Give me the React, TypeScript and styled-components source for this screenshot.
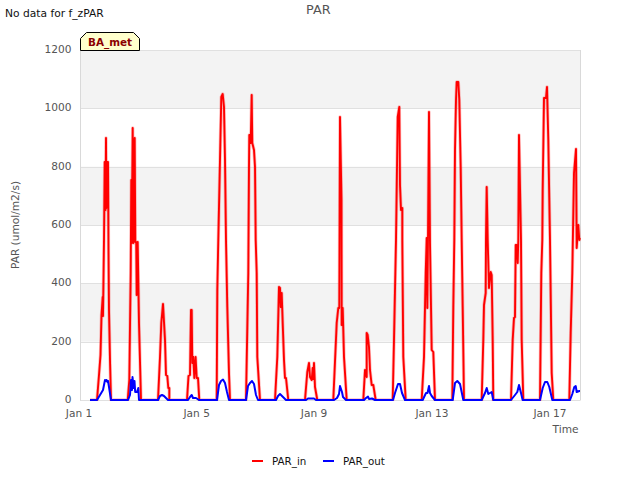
import React from "react";
import styled, { createGlobalStyle } from "styled-components";

const Global = createGlobalStyle`
  html, body { margin: 0; padding: 0; background: #fff; }
  * { box-sizing: border-box; }
`;

const Figure = styled.div`
  width: 640px;
  height: 480px;
  display: flex;
  flex-direction: column;
  font-family: "DejaVu Sans", sans-serif;
  overflow: hidden;
`;

const Header = styled.header`
  height: 30px;
  flex: none;
  display: flex;
  align-items: flex-start;
  padding-left: 5px;
`;

const Note = styled.span`
  font-size: 10.7px;
  line-height: 12px;
  margin-top: 8px;
  color: #111;
  width: 301px;
`;

const Title = styled.h1`
  margin: 3px 0 0;
  font-size: 12.8px;
  line-height: 14px;
  font-weight: 400;
  color: #555;
`;

const ChartArea = styled.div`
  position: relative;
  flex: none;
  height: 420px;
`;

const Plot = styled.svg`
  display: block;
  width: 640px;
  height: 420px;
`;

const AxisText = styled.text`
  font-family: "DejaVu Sans", sans-serif;
  font-size: 10.6px;
  fill: #555;
`;

const Badge = styled.div`
  position: absolute;
  left: 80px;
  top: 2px;
  width: 60px;
  height: 19px;
  display: flex;
  align-items: center;
  justify-content: center;
`;

const BadgeShape = styled.svg`
  position: absolute;
  inset: 0;
`;

const BadgeLabel = styled.span`
  position: relative;
  font-size: 10.4px;
  font-weight: 700;
  color: #8b0000;
`;

const Legend = styled.footer`
  height: 30px;
  flex: none;
  display: flex;
  align-items: flex-start;
  padding: 5px 0 0 252px;
`;

const LegendItem = styled.div<{ $w: number }>`
  width: ${(p) => p.$w}px;
  display: flex;
  align-items: center;
  font-size: 10.3px;
  line-height: 12px;
  color: #111;
`;

const Swatch = styled.i<{ $c: string }>`
  display: block;
  width: 11px;
  height: 2px;
  margin-right: 9px;
  background: ${(p) => p.$c};
`;

type P = [number, number];

const redDays: P[][] = [
  [[97,400],[99,375],[100.5,355],[101.5,315],[102.7,297],[103,316],[104,240],[104.7,162],[105.3,162],[105.5,210],[106,138],[106.4,208],[107,162],[108,162],[108.5,250],[109,310],[110,360],[111,400]],
  [[127.7,400],[129.3,380],[130.7,273],[131.3,180],[131.7,243],[132.7,128],[133.4,243],[134.7,138],[135.3,242],[136.2,242],[136.7,295],[137.7,242],[139,323],[141,400]],
  [[158,400],[160,357],[161.3,323],[163,304],[165,340],[166,375],[167.3,376],[168.3,388],[169.3,388],[169.3,400]],
  [[187,400],[188.5,376],[190,375],[191,310],[191.7,310],[192.3,363],[193.3,357],[194.3,378],[195.6,357],[196.7,378],[198,378],[199.3,400]],
  [[216.7,400],[217.3,290],[218.3,240],[220,160],[221.3,97],[222.7,94],[224,107],[225,160],[226,240],[227.3,307],[229,373],[230,400]],
  [[246,400],[248.3,273],[248.5,240],[249,167],[249.3,135],[250.7,135],[250.7,143],[251.7,95],[252.3,143],[254,150],[255,167],[255.7,240],[256.7,273],[257.3,357],[260,400]],
  [[275,400],[277.3,357],[279,287],[280,288],[280.7,307],[281.7,293],[282.7,323],[284,360],[285,378],[286,378],[288.3,400]],
  [[305,400],[307.3,372],[309,363],[310,377],[311.7,380],[312.7,368],[313.3,379],[314,363],[315,387],[317.3,400]],
  [[333.3,400],[336.7,323],[338.3,308],[339.3,308],[340,117],[341.5,200],[341.7,325],[342.7,308],[344,357],[346.7,400]],
  [[363.3,400],[365,370],[366.7,377],[366.7,333],[367.7,335],[369,347],[370,370],[371.7,385],[373.3,385],[375.7,400]],
  [[392.7,400],[394,340],[396,240],[397.7,117],[399.3,107],[400,185],[401,210],[402.3,208],[402.3,240],[403.3,357],[405.7,400]],
  [[421.7,400],[424,357],[425.7,273],[426.7,238],[427.3,308],[428,238],[429,112],[430,243],[431.7,350],[433.3,352],[435,400]],
  [[452.3,400],[453.3,307],[454.3,240],[455,150],[456,100],[456.7,82],[458.3,82],[459.3,100],[460.7,167],[461.7,240],[462.7,307],[464,400]],
  [[481.7,400],[483.3,340],[484,305],[485.7,293],[486,238],[486.7,187],[487.7,240],[489,288],[490.7,272],[491.7,275],[492.7,340],[493.3,400]],
  [[511,400],[512.7,340],[514,318],[515,317],[515.7,245],[516.7,245],[517.7,263],[518.3,240],[519,135],[520,187],[521,240],[521.7,340],[523.3,400]],
  [[540,400],[541.3,273],[542.3,240],[542.7,190],[544,98],[546,98],[547,87],[548.3,140],[550,240],[551.7,373],[553.3,400]],
  [[569.3,400],[570.7,333],[572.3,273],[574,173],[576,149],[576.7,248],[578.3,225],[579.3,240],[580,238]],
];

const blueDays: P[][] = [
  [[97,400],[100,395],[103,390],[105,380],[106,381],[106.5,380],[107.5,382],[108,381],[109,387],[111,400]],
  [[128,400],[130,395],[131,380],[132,390],[132.5,377],[133.7,388],[134.5,381],[135.2,392],[137,392],[138.3,388],[139,400]],
  [[158,400],[160,396],[162,395],[164,396],[166,398],[168,400]],
  [[188,400],[190,397],[191.7,395],[193,398],[196,398],[199,400]],
  [[217,400],[219,385],[221,381],[223,379.5],[225,383],[227,392],[229,400]],
  [[246,400],[248,386],[250,383],[252,381],[254,384],[256,395],[258,400]],
  [[276,400],[278,396],[280,394],[283,397],[286,400]],
  [[306,400],[308,398.5],[314,398.5],[316,400]],
  [[334,400],[337,398],[339,394],[340,386],[342,392],[343,397],[346,400]],
  [[364,400],[366,398],[368,396.5],[369,399],[372,398.5],[375,400]],
  [[393,400],[395,393],[398,384],[400,384],[402,393],[405,400]],
  [[422.7,400],[426,393],[427.5,393],[429,386],[430,393],[431.7,396],[435,400]],
  [[452.7,400],[455,383],[457.3,381],[460,384],[463.3,400]],
  [[481.7,400],[485,393],[486.7,388],[488.3,394],[491.7,392],[493.3,400]],
  [[511,400],[515,395],[517.3,392],[519,385],[521,393],[522.7,400]],
  [[540,400],[542.7,388],[545,382],[547.3,382],[549.3,387],[552.3,400]],
  [[570,400],[572.3,394],[574.3,387],[575.7,386],[576.7,392],[579.3,391],[580,391]],
];

const toPoints = (days: P[][]) =>
  [[90, 400] as P, ...days.flat()].map(([x, y]) => `${x},${y}`).join(" ");

const redLine = toPoints(redDays);
const blueLine = toPoints(blueDays);

const gridY = [50, 108.33, 166.67, 225, 283.33, 341.67, 400];
const yLabels = ["1200", "1000", "800", "600", "400", "200", "0"];
const bands = [0, 2, 4];
const xTicks: [number, string][] = [[79, "Jan 1"], [196.7, "Jan 5"], [314, "Jan 9"], [432, "Jan 13"], [550, "Jan 17"]];

export default function App() {
  return (
    <Figure>
      <Global />
      <Header>
        <Note>No data for f_zPAR</Note>
        <Title>PAR</Title>
      </Header>
      <ChartArea>
        <Plot viewBox="0 30 640 420">
          <defs>
            <clipPath id="plot-clip">
              <rect x={80} y={50} width={501} height={351} />
            </clipPath>
          </defs>
          {bands.map((i) => (
            <rect key={i} x={80} y={gridY[i]} width={500} height={gridY[i + 1] - gridY[i]} fill="#f3f3f3" />
          ))}
          {gridY.map((y) => (
            <line key={y} x1={80} x2={580} y1={Math.round(y) + 0.5} y2={Math.round(y) + 0.5} stroke="#e0e0e0" strokeWidth={1} />
          ))}
          <line x1={80.5} x2={80.5} y1={50} y2={400.5} stroke="#d9d9d9" />
          <line x1={580.5} x2={580.5} y1={50} y2={400.5} stroke="#d9d9d9" />
          <g clipPath="url(#plot-clip)">
            <polyline points={redLine} fill="none" stroke="#ff0000" strokeOpacity={0.25} strokeWidth={3.4} strokeLinejoin="round" />
            <polyline points={redLine} fill="none" stroke="#ff0000" strokeWidth={1.9} strokeLinejoin="round" />
            <polyline points={blueLine} fill="none" stroke="#0000ff" strokeWidth={2} strokeLinejoin="round" />
          </g>
          {yLabels.map((t, i) => (
            <AxisText key={t} x={71.5} y={gridY[i] + 3} textAnchor="end">{t}</AxisText>
          ))}
          {xTicks.map(([x, t]) => (
            <AxisText key={t} x={x} y={417} textAnchor="middle">{t}</AxisText>
          ))}
          <AxisText x={578.5} y={433} textAnchor="end">Time</AxisText>
          <AxisText x={0} y={0} textAnchor="middle" transform="translate(18.5,225) rotate(-90)">PAR (umol/m2/s)</AxisText>
        </Plot>
        <Badge>
          <BadgeShape width={60} height={19} viewBox="0 0 60 19">
            <polygon points="0.5,18.5 0.5,6.5 6.5,0.5 53.5,0.5 59.5,6.5 59.5,18.5" fill="#ffffcc" stroke="#000" strokeWidth={1} />
          </BadgeShape>
          <BadgeLabel>BA_met</BadgeLabel>
        </Badge>
      </ChartArea>
      <Legend>
        <LegendItem $w={71}><Swatch $c="#ff0000" />PAR_in</LegendItem>
        <LegendItem $w={70}><Swatch $c="#0000ff" />PAR_out</LegendItem>
      </Legend>
    </Figure>
  );
}
